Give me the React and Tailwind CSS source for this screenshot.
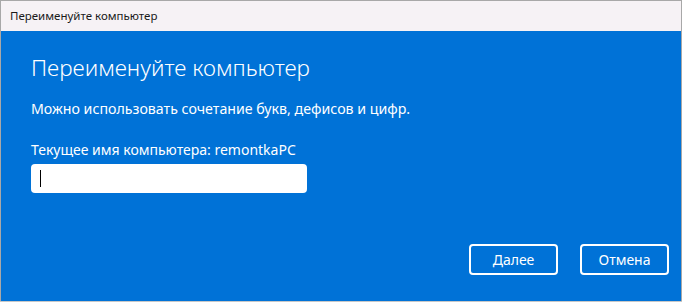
export default function App() {
  return (
    <div className="w-[682px] h-[302px] bg-white relative overflow-hidden" style={{ fontFamily: '"Noto Sans", "Open Sans", sans-serif' }}>
      <div className="w-[682px] h-[301px] border-l border-t border-r border-[#a8a8a8] flex flex-col">
        <div className="h-[30px] bg-[#f6f2f5] flex items-center pl-[9px] text-[11.5px] text-[#1a1a1a] shrink-0">
          Переименуйте компьютер
        </div>
        <div className="flex-1 bg-[#0072d7] text-white flex flex-col pl-[30px] pr-[12px]">
          <div className="mt-[22px] text-[22.5px] font-light leading-[30px]">Переименуйте компьютер</div>
          <div className="mt-[16px] text-[14.2px] leading-[20px]">Можно использовать сочетание букв, дефисов и цифр.</div>
          <div className="mt-[21px] text-[14px] leading-[20px]">Текущее имя компьютера: remontkaPC</div>
          <div className="mt-[4px] w-[276px] h-[29px] bg-white rounded-[4px] flex items-center pl-[9px]">
            <div className="w-[1px] h-[17px] bg-black" />
          </div>
          <div className="mt-[51px] flex justify-end gap-[22px]">
            <button className="w-[89px] h-[31px] border-2 border-white rounded-[4px] text-[14px] text-white">Далее</button>
            <button className="w-[89px] h-[31px] border-2 border-white rounded-[4px] text-[14px] text-white">Отмена</button>
          </div>
        </div>
      </div>
      <div className="h-[1px] bg-[#c8c8c8]" />
    </div>
  );
}
